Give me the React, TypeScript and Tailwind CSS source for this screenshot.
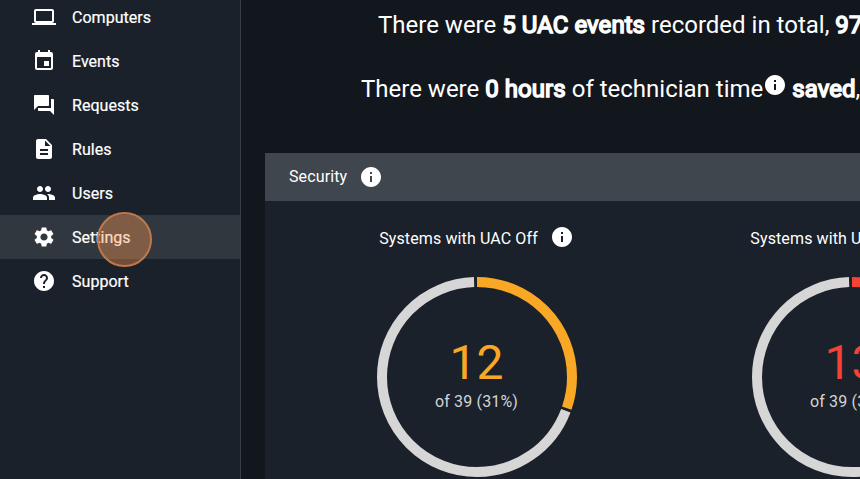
import type { IconType } from "react-icons";
import { MdComputer, MdEvent, MdForum, MdDescription, MdPeople, MdSettings, MdHelp, MdInfo } from "react-icons/md";

const nav: { label: string; Icon: IconType; active?: boolean }[] = [
  { label: "Computers", Icon: MdComputer },
  { label: "Events", Icon: MdEvent },
  { label: "Requests", Icon: MdForum },
  { label: "Rules", Icon: MdDescription },
  { label: "Users", Icon: MdPeople },
  { label: "Settings", Icon: MdSettings, active: true },
  { label: "Support", Icon: MdHelp },
];

function Strong({ children }: { children: string }) {
  return <span className="tracking-[0.06px] [-webkit-text-stroke:1.5px_white]">{children}</span>;
}

function Gauge({ title, value, total, percent, color }: { title: string; value: number; total: number; percent: number; color: string }) {
  const share = (value / total) * 360;
  return (
    <div className="flex w-[375px] shrink-0 flex-col items-center">
      <div className="flex h-6 items-center gap-3 whitespace-nowrap text-base">
        <span className="pt-[3px] tracking-[0.12px]">{title}</span>
        <MdInfo size={24} />
      </div>
      <div className="mt-7 grid size-[200px] place-items-center">
        <svg viewBox="0 0 200 200" className="col-start-1 row-start-1 size-[200px]" fill="none" strokeWidth="10">
          <g transform="rotate(-90 100 100)">
            <circle cx="100" cy="100" r="95" pathLength="360" stroke={color} strokeDasharray={`${share - 1.6} 360`} />
            <circle cx="100" cy="100" r="95" pathLength="360" stroke="#d6d6d6" strokeDasharray={`${360 - share - 1.8} 360`} strokeDashoffset={-share} />
          </g>
        </svg>
        <div className="col-start-1 row-start-1 flex flex-col items-center">
          <span className="text-5xl leading-[46px]" style={{ color }}>{value}</span>
          <span className="mt-1 text-base tracking-[0.15px] text-[#d2d4d6]">of {total} ({percent}%)</span>
        </div>
      </div>
    </div>
  );
}

export default function App() {
  return (
    <div className="flex h-[479px] w-[860px] overflow-hidden bg-[#12161d] font-['Roboto',sans-serif] text-white">
      <aside className="relative w-[241px] shrink-0 border-r border-[#3a3f47] bg-[#1b212a]">
        <nav className="-mt-[5px]">
          {nav.map(({ label, Icon, active }) => (
            <a key={label} className={`flex h-11 items-center gap-4 pl-8 text-base ${active ? "bg-[#31373f]" : ""}`}>
              <Icon size={24} />
              <span className="pt-px tracking-[0.03px] [-webkit-text-stroke:0.2px_white]">{label}</span>
            </a>
          ))}
        </nav>
        <span className="absolute left-[97px] top-[212px] size-[55px] rounded-full border-2 border-[#c0784a] bg-[#ff9851]/38" />
      </aside>
      <main className="min-w-0 flex-1 overflow-hidden pl-6">
        <p className="h-[50px] whitespace-nowrap pl-[113px] text-2xl leading-[50px]">
          There were <Strong>5 UAC events</Strong> recorded in total, <Strong>97</Strong>
        </p>
        <p className="mt-[14px] flex h-[50px] whitespace-pre pl-[96px] text-2xl leading-[50px]">
          There were <Strong>0 hours</Strong> of technician time<MdInfo size={24} className="mt-[9px] shrink-0" />
          <span className="pl-[5px]"><Strong>saved</Strong>,</span>
        </p>
        <section className="mt-[39px] h-[340px] w-[1174px] bg-[#1b212a]">
          <header className="flex h-12 items-center gap-3 bg-[#3f464d] px-6 text-base">
            <span className="tracking-[0.12px]">Security</span>
            <MdInfo size={24} />
          </header>
          <div className="flex pl-[24px] pt-6">
            <Gauge title="Systems with UAC Off" value={12} total={39} percent={31} color="#f9a825" />
            <Gauge title="Systems with UAC Low" value={13} total={39} percent={33} color="#f44336" />
          </div>
        </section>
      </main>
    </div>
  );
}
